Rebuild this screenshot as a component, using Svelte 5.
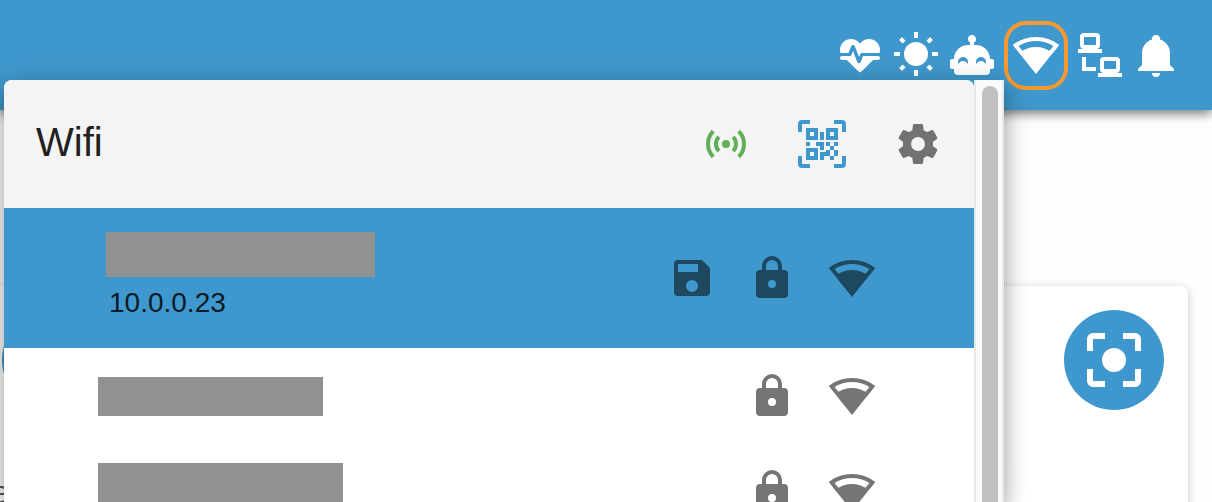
<script>
  const icons = {
    heart: 'M7.5 4A5.5 5.5 0 0 0 2 9.5c0 .5.09 1 .22 1.5H6.3l1.27-3.37c.3-.8 1.48-.88 1.86 0L11.5 13l.59-1.42c.13-.33.48-.58.91-.58h8.78c.13-.5.22-1 .22-1.5A5.5 5.5 0 0 0 16.5 4c-1.86 0-3.5.93-4.5 2.34C11 4.93 9.36 4 7.5 4M3 12.5a1 1 0 0 0-1 1 1 1 0 0 0 1 1h2.44L11 20c1 .9 1 .9 2 0l5.56-5.5H21a1 1 0 0 0 1-1 1 1 0 0 0-1-1h-7.47l-1.06 2.8c-.4 1.07-1.53 1-1.92.09L8.5 10l-.6 1.6c-.15.6-.5.9-1 .9Z',
    sun: 'M12 5.5a6 6 0 1 0 0 12 6 6 0 0 0 0-12M11 .5h2v3h-2ZM11 19.5h2v3h-2ZM1 10.5h3v2H1ZM20 10.5h3v2h-3ZM3.55 4.45l1.41-1.41 1.8 1.79-1.42 1.42ZM17.24 4.83l1.8-1.79 1.41 1.41-1.79 1.8ZM17.24 18.17l1.42-1.42 1.79 1.8-1.41 1.41ZM3.55 18.55l1.79-1.8 1.42 1.42-1.8 1.79Z',
    robot: 'M22 14h-1c0-3.87-3.13-7-7-7h-1V5.73A2 2 0 1 0 10 4c0 .74.4 1.39 1 1.73V7h-1c-3.87 0-7 3.13-7 7H2c-.55 0-1 .45-1 1v3c0 .55.45 1 1 1h1v1a2 2 0 0 0 2 2h14a2 2 0 0 0 2-2v-1h1c.55 0 1-.45 1-1v-3c0-.55-.45-1-1-1M9.79 16.5C9.4 15.62 8.53 15 7.5 15s-1.9.62-2.29 1.5c-.13-.31-.21-.64-.21-1a2.5 2.5 0 0 1 5 0c0 .36-.08.69-.21 1M18.79 16.5c-.39-.88-1.29-1.5-2.29-1.5s-1.9.62-2.29 1.5c-.13-.31-.21-.64-.21-1a2.5 2.5 0 0 1 5 0c0 .36-.08.69-.21 1Z',
    wifi: 'M12 3C7.79 3 3.7 4.41.38 7 4.41 12.06 7.89 16.37 12 21.5 16.08 16.42 20.24 11.24 23.65 7 20.32 4.41 16.22 3 12 3M12 5c3.07 0 6.09.86 8.71 2.45l-1.94 2.43C17.26 9 14.88 8 12 8 9 8 6.68 9 5.21 9.84L3.27 7.44C5.91 5.85 8.93 5 12 5Z',
    lan: 'M4 1a2 2 0 0 0-2 2v4a2 2 0 0 0 2 2H1v2h12V9h-3a2 2 0 0 0 2-2V3a2 2 0 0 0-2-2ZM4 3h6v4H4ZM3 13v7h7v-2H5v-5ZM14 13a2 2 0 0 0-2 2v4a2 2 0 0 0 2 2h-3v2h12v-2h-3a2 2 0 0 0 2-2v-4a2 2 0 0 0-2-2ZM14 15h6v4h-6Z',
    bell: 'M21 19v1H3v-1l2-2v-6c0-3.1 2.03-5.83 5-6.71V4a2 2 0 0 1 4 0v.29c2.97.88 5 3.61 5 6.71v6l2 2M14 21a2 2 0 0 1-4 0Z',
    access: 'M4.93 4.93A9.97 9.97 0 0 0 2 12c0 2.76 1.12 5.26 2.93 7.07l1.41-1.41A7.94 7.94 0 0 1 4 12c0-2.21.89-4.22 2.34-5.66ZM19.07 4.93l-1.41 1.41A7.94 7.94 0 0 1 20 12c0 2.22-.89 4.22-2.34 5.66l1.41 1.41A9.97 9.97 0 0 0 22 12c0-2.76-1.12-5.26-2.93-7.07M7.76 7.76A5.98 5.98 0 0 0 6 12c0 1.65.67 3.15 1.76 4.24l1.41-1.41A3.99 3.99 0 0 1 8 12c0-1.11.45-2.11 1.17-2.83ZM16.24 7.76l-1.41 1.41A3.99 3.99 0 0 1 16 12c0 1.11-.45 2.11-1.17 2.83l1.41 1.41A5.98 5.98 0 0 0 18 12c0-1.65-.67-3.15-1.76-4.24M12 10a2 2 0 1 0 0 4 2 2 0 0 0 0-4Z',
    qr: 'M4 4h6v6H4ZM20 4v6h-6V4ZM14 15h2v-2h-2v-2h2v2h2v-2h2v2h-2v2h2v3h-2v2h-2v-2h-3v2h-2v-4h3ZM16 15v3h2v-3ZM4 20v-6h6v6ZM6 6v2h2V6ZM16 6v2h2V6ZM6 16v2h2v-2ZM4 11h2v2H4ZM9 11h4v4h-2v-2H9ZM11 6h2v4h-2ZM2 2v4H0V2a2 2 0 0 1 2-2h4v2ZM22 0a2 2 0 0 1 2 2v4h-2V2h-4V0ZM2 18v4h4v2H2a2 2 0 0 1-2-2v-4ZM22 22v-4h2v4a2 2 0 0 1-2 2h-4v-2Z',
    cog: 'M12 15.5A3.5 3.5 0 0 1 8.5 12 3.5 3.5 0 0 1 12 8.5a3.5 3.5 0 0 1 3.5 3.5 3.5 3.5 0 0 1-3.5 3.5m7.43-2.53c.04-.32.07-.64.07-.97 0-.33-.03-.66-.07-1l2.11-1.63c.19-.15.24-.42.12-.64l-2-3.46c-.12-.22-.39-.31-.61-.22l-2.49 1c-.52-.39-1.06-.73-1.69-.98l-.37-2.65A.506.506 0 0 0 14 2h-4c-.25 0-.46.18-.5.42l-.37 2.65c-.63.25-1.17.59-1.69.98l-2.49-1c-.22-.09-.49 0-.61.22l-2 3.46c-.13.22-.07.49.12.64L4.57 11c-.04.34-.07.67-.07 1 0 .33.03.65.07.97l-2.11 1.66c-.19.15-.25.42-.12.64l2 3.46c.12.22.39.3.61.22l2.49-1.01c.52.4 1.06.74 1.69.99l.37 2.65c.04.24.25.42.5.42h4c.25 0 .46-.18.5-.42l.37-2.65c.63-.26 1.17-.59 1.69-.99l2.49 1.01c.22.08.49 0 .61-.22l2-3.46c.12-.22.07-.49-.12-.64Z',
    save: 'M17 3H5a2 2 0 0 0-2 2v14a2 2 0 0 0 2 2h14a2 2 0 0 0 2-2V7ZM15 9H5V5h10ZM12 13a3 3 0 1 1 0 6 3 3 0 0 1 0-6Z',
    lock: 'M12 17a2 2 0 0 0 0-4 2 2 0 0 0 0 4M18 8a2 2 0 0 1 2 2v10a2 2 0 0 1-2 2H6a2 2 0 0 1-2-2V10a2 2 0 0 1 2-2h1V6a5 5 0 0 1 10 0v2ZM12 3a3 3 0 0 0-3 3v2h6V6a3 3 0 0 0-3-3Z',
    focus: 'M12 8a4 4 0 1 0 0 8 4 4 0 0 0 0-8M5 15H3v4a2 2 0 0 0 2 2h4v-2H5ZM5 5h4V3H5a2 2 0 0 0-2 2v4h2ZM19 3h-4v2h4v4h2V5a2 2 0 0 0-2-2M19 19h-4v2h4a2 2 0 0 0 2-2v-4h-2Z'
  };

  const tools = [
    { icon: 'heart', label: 'Health' },
    { icon: 'sun', label: 'Brightness' },
    { icon: 'robot', label: 'Robot' },
    { icon: 'wifi', label: 'Wifi', active: true },
    { icon: 'lan', label: 'Network' },
    { icon: 'bell', label: 'Notifications' }
  ];

  const actions = [
    { icon: 'access', label: 'Access point', tone: 'green' },
    { icon: 'qr', label: 'QR code', tone: 'blue' },
    { icon: 'cog', label: 'Settings', tone: 'grey' }
  ];

  const networks = [
    { size: 'first', ip: '10.0.0.23', icons: ['save', 'lock', 'wifi'] },
    { size: 'second', icons: ['lock', 'wifi'] },
    { size: 'third', icons: ['lock', 'wifi'] }
  ];
</script>

{#snippet glyph(name)}
  <svg class="icon" viewBox="0 0 24 24" aria-hidden="true">
    <path d={icons[name]} fill="currentColor" fill-rule="evenodd" />
  </svg>
{/snippet}

<div class="page">
  <header class="bar">
    <nav class="tools">
      {#each tools as tool}
        <button class="tool" class:active={tool.active} aria-label={tool.label}>{@render glyph(tool.icon)}</button>
      {/each}
    </nav>
  </header>

  <main>
    <section class="card">
      <div class="card-top">
        <button class="round" aria-label="Focus left">{@render glyph('focus')}</button>
        <button class="round" aria-label="Focus right">{@render glyph('focus')}</button>
      </div>
      <p>e</p>
    </section>
  </main>

  <aside class="menu">
    <div class="content">
      <div class="head">
        <h1>Wifi</h1>
        <div class="actions">
          {#each actions as action}
            <button class={action.tone} aria-label={action.label}>{@render glyph(action.icon)}</button>
          {/each}
        </div>
      </div>
      <ul>
        {#each networks as network}
          <li class:connected={network.ip}>
            <div class="name">
              <span class="mask {network.size}"></span>
              {#if network.ip}<span class="ip">{network.ip}</span>{/if}
            </div>
            <div class="state">
              {#each network.icons as icon}{@render glyph(icon)}{/each}
            </div>
          </li>
        {/each}
      </ul>
    </div>
    <div class="track"><div class="thumb"></div></div>
  </aside>
</div>

<style>
  :global(body) {
    margin: 0;
  }
  .page {
    position: relative;
    height: 100vh;
    overflow: hidden;
    background: #fefefe;
    font-family: "Liberation Sans", Arial, sans-serif;
    color: #212121;
  }
  button {
    display: flex;
    align-items: center;
    justify-content: center;
    padding: 0;
    border: 0;
    background: none;
    color: inherit;
  }
  .icon {
    display: block;
    flex: none;
    width: 48px;
    height: 48px;
  }
  .bar {
    position: relative;
    display: flex;
    align-items: center;
    justify-content: flex-end;
    box-sizing: border-box;
    height: 110px;
    padding: 0 32px;
    background: #3f98cd;
    color: #fff;
    box-shadow: 0 4px 10px rgba(0, 0, 0, 0.5);
  }
  .tools {
    display: flex;
    align-items: center;
    gap: 8px;
  }
  .active {
    box-sizing: border-box;
    width: 64px;
    height: 69px;
    border: 4px solid #f89830;
    border-radius: 22px;
  }
  .card {
    margin: 176px 24px 0 0;
    padding: 24px 24px 24px 2px;
    min-height: 300px;
    border-radius: 0 8px 8px 0;
    background: #fff;
    box-shadow: 0 2px 10px rgba(0, 0, 0, 0.22);
  }
  .card-top {
    display: flex;
    justify-content: space-between;
  }
  .round {
    width: 100px;
    height: 100px;
    border-radius: 50%;
    background: #3f98cd;
    color: #fff;
  }
  .round .icon {
    width: 72px;
    height: 72px;
  }
  .card p {
    margin: 64px 0 0 -10px;
    color: #555;
    font-size: 32px;
    line-height: 36px;
  }
  .menu {
    position: absolute;
    top: 80px;
    right: 208px;
    bottom: 0;
    left: 4px;
    display: flex;
    border-radius: 8px 0 0 0;
    box-shadow: 0 10px 20px rgba(0, 0, 0, 0.3), 0 4px 32px rgba(0, 0, 0, 0.14);
  }
  .content {
    flex: 1;
    overflow: hidden;
    border-radius: 8px 8px 0 0;
    background: #fff;
  }
  .head {
    display: flex;
    align-items: center;
    justify-content: space-between;
    height: 128px;
    padding: 0 32px;
    background: #f4f4f4;
  }
  h1 {
    margin: 0;
    padding-bottom: 4px;
    font-size: 40px;
    font-weight: 400;
    line-height: 48px;
  }
  .actions {
    display: flex;
    gap: 48px;
  }
  .green {
    color: #60af58;
  }
  .blue {
    color: #3f98cd;
  }
  .grey {
    color: #727272;
  }
  ul {
    margin: 0;
    padding: 0;
    list-style: none;
  }
  li {
    display: flex;
    align-items: center;
    justify-content: space-between;
    height: 96px;
    padding: 0 98px 0 94px;
    color: #757575;
  }
  .connected {
    height: 140px;
    padding-left: 102px;
    background: #3f98cd;
    color: #1d485f;
  }
  .name {
    display: flex;
    flex-direction: column;
    gap: 8px;
  }
  .connected .name {
    padding-bottom: 4px;
  }
  .mask {
    height: 39px;
    background: #919191;
  }
  .first {
    width: 269px;
    height: 45px;
  }
  .second {
    width: 225px;
  }
  .third {
    width: 245px;
    height: 58px;
  }
  .ip {
    padding-left: 3px;
    color: #0b1b25;
    font-size: 28px;
    line-height: 36px;
  }
  .state {
    display: flex;
    gap: 32px;
  }
  .track {
    box-sizing: border-box;
    width: 30px;
    padding: 6px 4px 0 6px;
    border: solid #e8e8e8;
    border-width: 0 2px;
    background: #fafafa;
  }
  .thumb {
    width: 16px;
    height: 100%;
    border-radius: 8px 8px 0 0;
    background: #c1c1c1;
  }
</style>
